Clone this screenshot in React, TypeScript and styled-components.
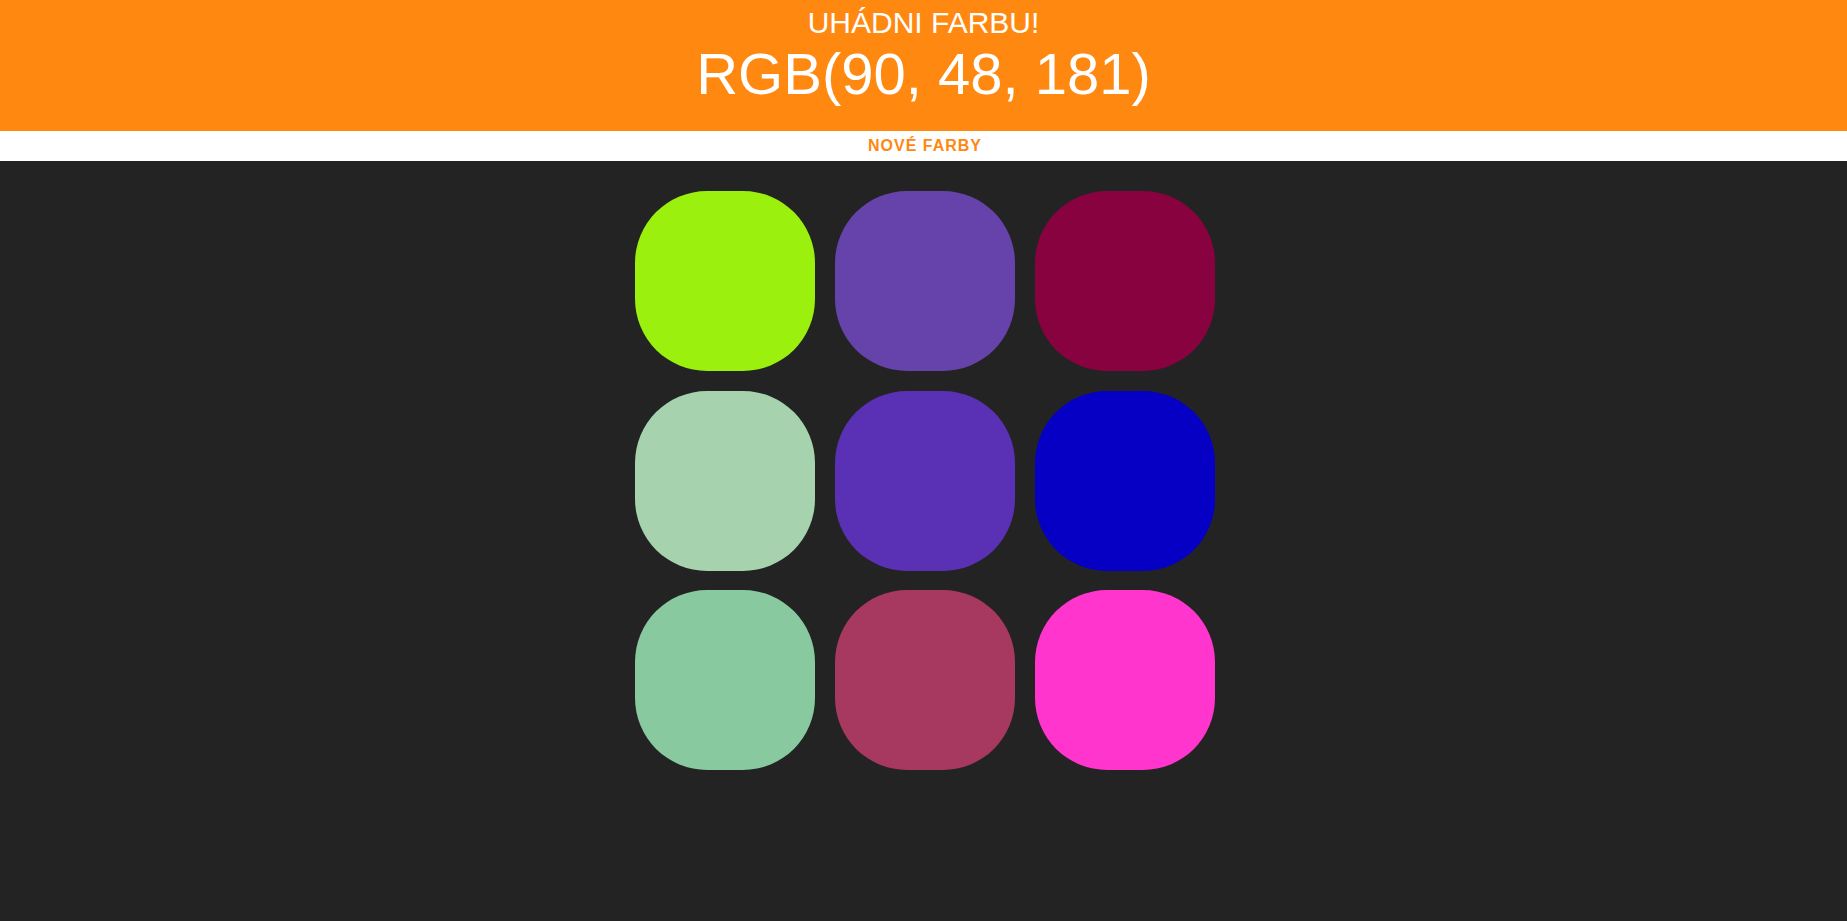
import React from "react";
import styled, { createGlobalStyle } from "styled-components";

const GlobalStyle = createGlobalStyle`
  html, body {
    margin: 0;
    padding: 0;
    background: #232323;
    font-family: "Liberation Sans", Arial, sans-serif;
  }
  * { box-sizing: border-box; }
`;

const Page = styled.div`
  min-height: 921px;
  background: #232323;
`;

const Header = styled.h1`
  margin: 0;
  height: 131px;
  padding-top: 8px;
  background: #ff8811;
  color: #ffffff;
  text-align: center;
  font-weight: 400;
  text-transform: uppercase;
`;

const Title = styled.span`
  display: block;
  font-size: 30px;
  line-height: 30px;
`;

const Target = styled.span`
  display: block;
  margin-top: 4px;
  font-size: 58px;
  line-height: 1.1;
`;

const Stripe = styled.div`
  height: 30px;
  background: #ffffff;
  display: flex;
  justify-content: center;
  align-items: center;
  padding-left: 3px;
`;

const ResetButton = styled.button`
  border: none;
  background: none;
  padding: 0;
  height: 30px;
  line-height: 30px;
  font-family: "Liberation Sans", Arial, sans-serif;
  font-size: 16px;
  font-weight: 700;
  letter-spacing: 1px;
  text-transform: uppercase;
  color: #ff8811;
  cursor: pointer;
`;

const Board = styled.div`
  display: grid;
  grid-template-columns: repeat(3, 180px);
  grid-auto-rows: 180px;
  column-gap: 20px;
  row-gap: 19.5px;
  justify-content: center;
  padding: 30px 0 0 2px;
`;

const Square = styled.div<{ $color: string }>`
  background: ${(p) => p.$color};
  border-radius: 40%;
`;

const colors = [
  "rgb(155, 240, 14)",
  "rgb(102, 67, 170)",
  "rgb(137, 2, 64)",
  "rgb(166, 211, 174)",
  "rgb(90, 48, 181)",
  "rgb(5, 0, 196)",
  "rgb(137, 201, 159)",
  "rgb(167, 57, 96)",
  "rgb(255, 53, 205)",
];

export default function App() {
  return (
    <Page>
      <GlobalStyle />
      <Header>
        <Title>Uhádni farbu!</Title>
        <Target>RGB(90, 48, 181)</Target>
      </Header>
      <Stripe>
        <ResetButton>Nové farby</ResetButton>
      </Stripe>
      <Board>
        {colors.map((c, i) => (
          <Square key={i} $color={c} />
        ))}
      </Board>
    </Page>
  );
}
